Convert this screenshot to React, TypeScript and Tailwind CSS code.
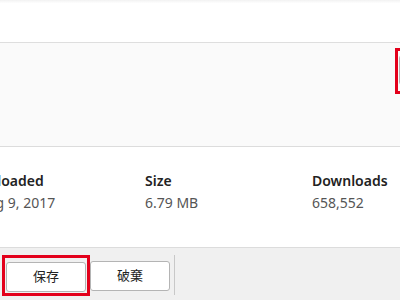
import { ReactNode } from 'react';

function Stat({ label, value }: { label: string; value: string }) {
  return (
    <div className="w-[167px] shrink-0">
      <div className="text-[14px] font-semibold leading-[20px] text-[#222]">{label}</div>
      <div className="mt-[2px] text-[14px] leading-[20px] text-[#555]">{value}</div>
    </div>
  );
}

function Highlight({ children }: { children: ReactNode }) {
  return <div className="border-[3px] border-[#e3001b] px-[1px] pt-[4px] pb-[1px]">{children}</div>;
}

function Button({ children }: { children?: ReactNode }) {
  return (
    <button className="h-[30px] w-[80px] rounded-[3px] border border-[#b4b4b4] bg-white text-[13px] text-[#222]">
      {children}
    </button>
  );
}

export default function App() {
  return (
    <div
      className="w-[400px] h-[300px] overflow-hidden bg-white flex flex-col"
      style={{ fontFamily: '"Noto Sans", "Noto Sans CJK JP", sans-serif' }}
    >
      <div className="h-[43px] shrink-0 bg-gradient-to-b from-[#f2f2f2] to-white to-[8%] border-b border-[#dedede]" />

      {/* options panel, its action button runs off the right edge */}
      <div className="h-[104px] shrink-0 bg-[#fafafa] border-b border-[#dcdcdc] flex items-start justify-end pt-[5px] -mr-[83px]">
        <Highlight>
          <Button />
        </Highlight>
      </div>

      <div className="h-[101px] shrink-0 bg-white border-b border-[#dcdcdc] flex pt-[24px] -ml-[22px]">
        <Stat label="Uploaded" value="Aug 9, 2017" />
        <Stat label="Size" value="6.79 MB" />
        <Stat label="Downloads" value="658,552" />
      </div>

      <div className="flex-1 bg-[#f0f0f0] flex items-center pl-[2px] pt-[2px]">
        <Highlight>
          <Button>保存</Button>
        </Highlight>
        <div className="pt-[2px]">
          <Button>破棄</Button>
        </div>
        <div className="ml-[4px] h-[40px] w-px bg-[#c8c8c8]" />
      </div>
    </div>
  );
}
